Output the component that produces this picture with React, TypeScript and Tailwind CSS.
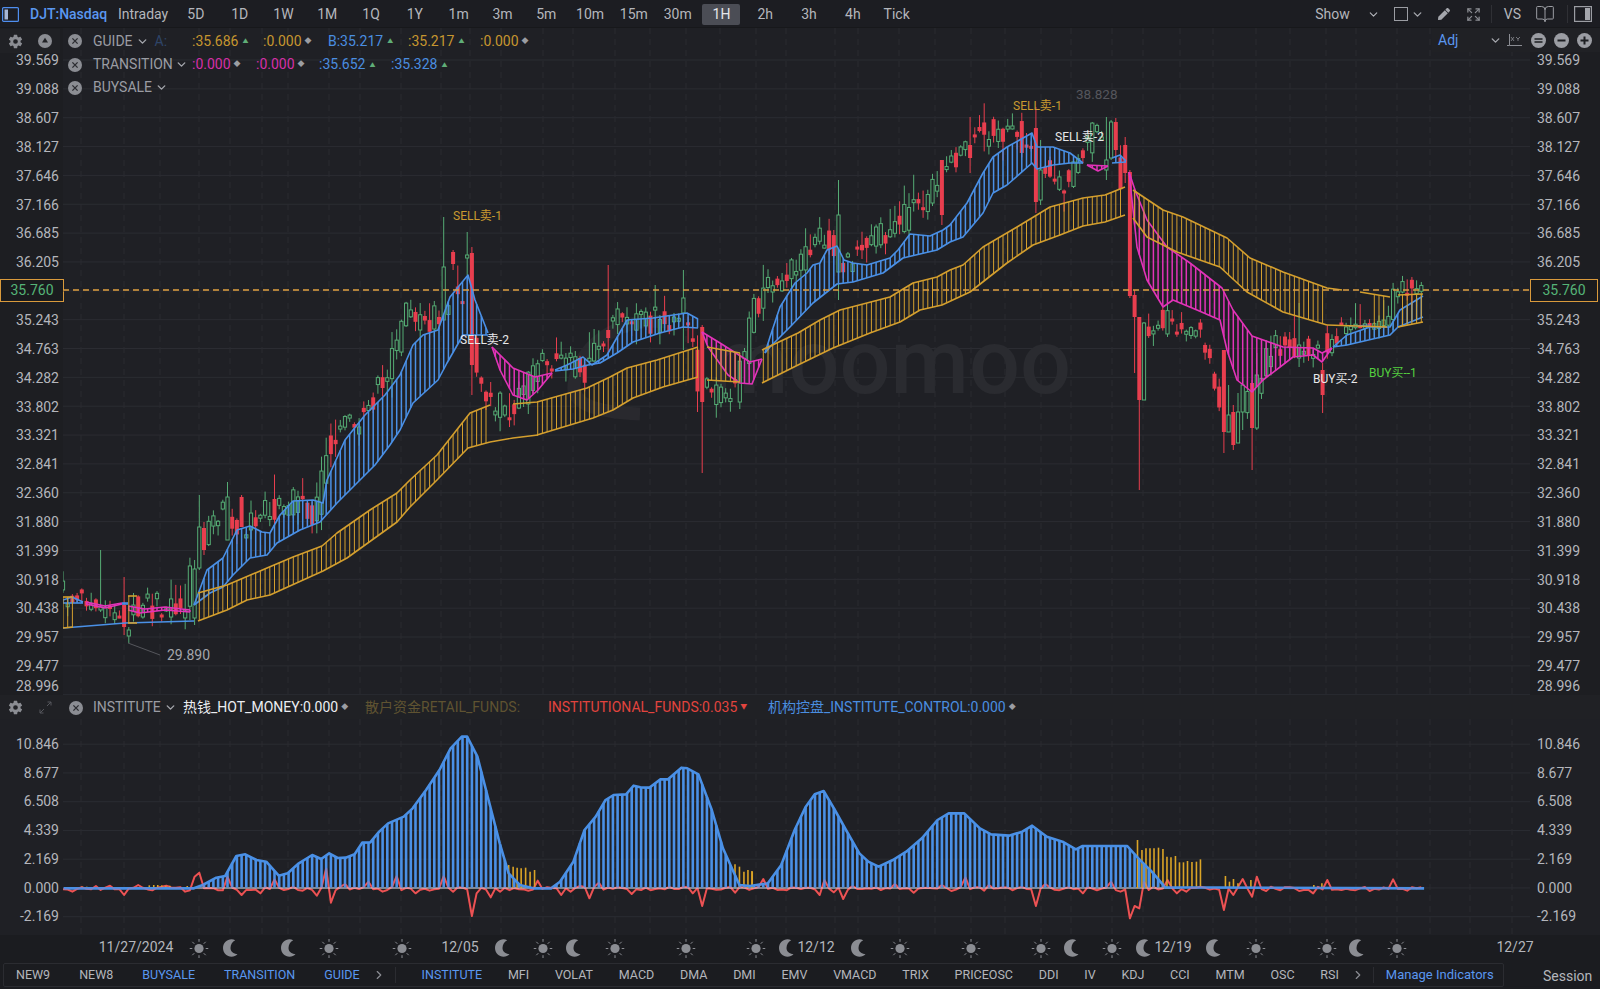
import React from "react";
import { ChevronDown, ChevronRight, BookOpen, Expand } from "lucide-react";
import { IoSettingsSharp } from "react-icons/io5";
import { FaPen } from "react-icons/fa";

type P = [number, number];
const STEP = 4.7;
const X0 = 63;
const N = Math.floor((1425 - X0) / STEP);
const xs = Array.from({ length: N + 1 }, (_, i) => X0 + i * STEP);

function rngOf(seed: number) {
  let a = seed;
  return () => {
    a |= 0;
    a = (a + 0x6d2b79f5) | 0;
    let t = Math.imul(a ^ (a >>> 15), 1 | a);
    t = (t + Math.imul(t ^ (t >>> 7), 61 | t)) ^ t;
    return ((t ^ (t >>> 14)) >>> 0) / 4294967296;
  };
}
function at(pts: P[], x: number) {
  if (x <= pts[0][0]) return pts[0][1];
  for (let i = 1; i < pts.length; i++) {
    if (x <= pts[i][0]) {
      const [a, b] = pts[i - 1];
      const [c, d] = pts[i];
      return b + ((d - b) * (x - a)) / (c - a);
    }
  }
  return pts[pts.length - 1][1];
}
const line = (pts: P[]) => pts.map((p) => p.join(",")).join(" ");

const BLUE = "#4a90e6";
const MAG = "#e233b8";
const GOLD = "#d49f2e";
const RED = "#e83e4e";
const GREEN = "#55ac74";

type Band = { c: string; u: P[]; l: P[]; from?: number; to?: number };
const bands: Band[] = [
  { c: BLUE, u: [[63, 600], [72, 597], [83, 602]], l: [[63, 603], [83, 603]] },
  { c: MAG, u: [[86, 602], [105, 606], [122, 603]], l: [[86, 604], [105, 608], [122, 604]] },
  { c: BLUE, u: [[122, 603], [128, 603]], l: [[122, 604], [128, 604]] },
  { c: MAG, u: [[128, 606], [145, 609], [165, 607], [190, 610]], l: [[128, 610], [140, 613], [165, 610], [190, 612]] },
  {
    c: BLUE,
    u: [[194, 605], [207, 570], [223, 558], [237, 530], [250, 526], [262, 532], [270, 533], [280, 515], [293, 501], [313, 500], [323, 503], [327, 480], [345, 440], [365, 415], [385, 395], [400, 375], [413, 345], [423, 335], [438, 330], [450, 297], [468, 275], [475, 300], [488, 333]],
    l: [[194, 605], [210, 593], [223, 587], [233, 575], [250, 558], [267, 555], [277, 543], [300, 530], [320, 522], [337, 503], [357, 483], [375, 465], [390, 445], [400, 430], [413, 403], [438, 380], [447, 363], [463, 335], [488, 335]],
  },
  { c: MAG, u: [[492, 347], [513, 368], [535, 377], [552, 373]], l: [[492, 347], [500, 370], [513, 395], [527, 400], [538, 390], [552, 373]] },
  {
    c: BLUE,
    u: [[555, 370], [567, 365], [583, 357], [592, 365], [607, 355], [627, 320], [653, 318], [687, 313], [698, 319]],
    l: [[555, 371], [573, 369], [588, 365], [600, 363], [617, 353], [633, 342], [660, 333], [683, 327], [698, 328]],
  },
  { c: MAG, u: [[702, 332], [720, 343], [750, 362], [762, 359]], l: [[702, 332], [708, 347], [728, 375], [740, 383], [752, 384], [762, 359]] },
  {
    c: BLUE,
    u: [[765, 353], [770, 337], [780, 307], [795, 283], [807, 273], [813, 265], [820, 263], [827, 250], [837, 246], [844, 260], [853, 263], [867, 265], [890, 258], [898, 250], [910, 234], [930, 236], [943, 230], [950, 225], [967, 203], [983, 173], [993, 157], [1007, 147], [1032, 133], [1037, 147], [1053, 147], [1070, 153], [1083, 163]],
    l: [[765, 353], [770, 347], [790, 327], [813, 303], [837, 284], [853, 282], [883, 273], [903, 258], [920, 254], [937, 250], [950, 242], [963, 237], [983, 213], [993, 193], [1007, 185], [1032, 163], [1037, 169], [1053, 165], [1070, 163], [1083, 163]],
  },
  { c: MAG, u: [[1087, 165], [1108, 166]], l: [[1087, 165], [1098, 171], [1108, 166]] },
  { c: BLUE, u: [[1112, 158], [1120, 155], [1126, 161]], l: [[1112, 163], [1126, 162]] },
  {
    c: MAG,
    u: [[1129, 172], [1135, 190], [1147, 220], [1167, 247], [1190, 263], [1222, 288], [1233, 310], [1252, 336], [1283, 347], [1313, 348], [1322, 353], [1332, 348]],
    l: [[1129, 172], [1137, 247], [1147, 280], [1163, 307], [1173, 300], [1197, 310], [1220, 320], [1227, 350], [1237, 380], [1252, 392], [1263, 380], [1293, 357], [1313, 355], [1322, 362], [1332, 348]],
  },
  {
    c: BLUE,
    u: [[1333, 347], [1347, 335], [1370, 327], [1390, 327], [1400, 310], [1423, 296]],
    l: [[1333, 347], [1347, 345], [1390, 335], [1398, 327], [1423, 317]],
  },
  { c: GOLD, u: [[63, 597], [73, 597]], l: [[63, 628], [73, 627]], to: 73 },
  { c: GOLD, u: [[128, 596], [137, 596]], l: [[128, 623], [137, 623]], to: 130 },
  {
    c: GOLD,
    u: [[198, 593], [227, 585], [267, 568], [293, 557], [322, 546], [337, 533], [370, 510], [397, 493], [410, 480], [437, 455], [470, 413], [490, 405]],
    l: [[198, 621], [227, 610], [247, 600], [270, 595], [323, 571], [347, 558], [397, 522], [410, 507], [437, 480], [468, 448], [490, 442]],
  },
  {
    c: GOLD,
    u: [[513, 404], [537, 402], [587, 388], [610, 377], [627, 368], [657, 360], [698, 347]],
    l: [[537, 435], [593, 418], [613, 410], [633, 398], [663, 387], [698, 377]],
    from: 537,
  },
  { c: GOLD, u: [[707, 347], [740, 353]], l: [[707, 380], [740, 382]] },
  {
    c: GOLD,
    u: [[762, 350], [798, 333], [820, 320], [840, 310], [890, 297], [913, 283], [937, 277], [950, 270], [963, 265], [983, 247], [1017, 227], [1050, 207], [1083, 198], [1105, 195], [1125, 187]],
    l: [[762, 383], [798, 365], [833, 348], [870, 333], [900, 322], [920, 310], [942, 305], [970, 292], [1007, 263], [1033, 245], [1060, 235], [1083, 226], [1105, 222], [1125, 215]],
  },
  {
    c: GOLD,
    u: [[1133, 190], [1163, 210], [1183, 217], [1227, 238], [1250, 258], [1283, 272], [1327, 288], [1342, 290]],
    l: [[1133, 218], [1147, 237], [1177, 252], [1220, 267], [1247, 292], [1283, 312], [1327, 325]],
    to: 1327,
  },
  { c: GOLD, u: [[1360, 292], [1390, 297]], l: [[1327, 325], [1387, 327]], from: 1372, to: 1390 },
  { c: GOLD, u: [[1398, 295], [1423, 294]], l: [[1398, 327], [1423, 322]] },
];

const midPath: P[] = [[63, 592], [90, 603], [127, 615], [150, 605], [190, 612], [197, 545], [215, 525], [232, 510], [250, 530], [270, 510], [300, 500], [320, 520], [330, 445], [360, 420], [390, 380], [410, 315], [440, 320], [455, 292], [470, 320], [490, 400], [520, 410], [545, 352], [590, 372], [620, 320], [650, 322], [690, 315], [705, 392], [740, 392], [760, 305], [790, 272], [830, 232], [850, 262], [900, 225], [940, 190], [970, 140], [1020, 125], [1040, 170], [1070, 180], [1100, 130], [1125, 180], [1137, 330], [1160, 322], [1200, 325], [1226, 400], [1250, 410], [1275, 345], [1320, 350], [1345, 330], [1375, 326], [1392, 322], [1398, 290], [1405, 278], [1425, 292]];

type C = { x: number; top: number; bot: number; hi: number; lo: number; up: boolean };
const special: [number, boolean, number, number, number, number][] = [
  [99, true, 550, 612, 606, 610], [124, false, 577, 635, 605, 627], [128, true, 627, 643, 630, 636],
  [195, true, 560, 625, 569, 618], [199, true, 495, 570, 527, 568], [204, false, 522, 555, 528, 550],
  [228, true, 482, 540, 497, 540], [241, false, 495, 527, 497, 527], [443, true, 217, 320, 267, 320],
  [451, false, 250, 270, 252, 264], [467, true, 232, 275, 255, 258], [472, false, 247, 395, 253, 365],
  [610, false, 265, 353, 330, 338], [702, false, 325, 473, 327, 402], [685, true, 270, 350, 298, 313],
  [1037, false, 107, 213, 128, 202], [1042, true, 140, 205, 170, 200], [1108, true, 117, 180, 160, 170],
  [1113, true, 120, 160, 122, 158], [1117, false, 118, 158, 122, 150], [1126, false, 137, 183, 145, 173],
  [1130, false, 170, 298, 172, 296], [1134, false, 290, 373, 295, 317], [1137, false, 317, 490, 317, 400],
  [1142, true, 322, 400, 323, 400], [1226, false, 350, 453, 350, 432], [1229, true, 385, 432, 415, 432],
  [1234, false, 405, 450, 412, 445], [1238, true, 393, 443, 412, 443], [1242, true, 377, 430, 385, 412],
  [1252, false, 380, 470, 383, 428], [1255, true, 353, 430, 375, 428], [1322, false, 363, 413, 370, 395],
  [1297, true, 303, 367, 345, 358], [970, false, 117, 173, 145, 158], [837, true, 180, 300, 215, 272],
  [940, false, 160, 225, 160, 215],
];
const r1 = rngOf(77);
const candles: C[] = xs.map((x) => {
  const amp = x > 1345 && x < 1395 ? 8 : 28;
  const a = at(midPath, x) + (r1() - 0.5) * amp;
  const b = at(midPath, x + STEP) + (r1() - 0.5) * amp;
  const top = Math.min(a, b);
  const bot = Math.max(a, b);
  return {
    x,
    top,
    bot: bot < top + 3 ? top + 3 : bot,
    hi: top - 1 - r1() * r1() * 26,
    lo: bot + 1 + r1() * r1() * 20,
    up: b < a,
  };
});
special.forEach(([x, up, hi, lo, top, bot]) => {
  const i = Math.round((x - X0) / STEP);
  if (candles[i]) candles[i] = { x: candles[i].x, up, hi, lo, top, bot };
});

const z9 = (p: P): P => [60 + p[0] / 2.24, 720 + p[1] / 3];
const z10 = (p: P): P => [750 + p[0] / 2.24, 780 + p[1] / 3];
const histTop: P[] = [
  ...([[8, 505], [300, 505], [320, 495], [350, 473], [370, 468], [395, 408], [415, 403], [440, 420], [462, 425], [490, 467], [510, 460], [535, 430], [565, 405], [585, 417], [603, 400], [622, 414], [640, 413], [660, 403], [677, 368], [695, 367], [715, 335], [735, 310], [770, 290], [790, 265], [820, 210], [850, 150], [875, 85], [900, 50], [912, 50], [935, 110], [960, 240], [985, 370], [1005, 460], [1030, 495], [1060, 505], [1100, 505], [1120, 485], [1150, 425], [1175, 330], [1200, 290], [1222, 240], [1240, 225], [1268, 223], [1285, 197], [1300, 202], [1320, 203], [1345, 178], [1362, 178], [1392, 143], [1405, 145], [1430, 163], [1460, 270], [1485, 385], [1505, 445], [1522, 495]] as P[]).map(z9),
  ...([[0, 318], [40, 310], [70, 255], [100, 150], [125, 80], [145, 43], [165, 33], [190, 90], [215, 150], [245, 220], [265, 245], [288, 260], [320, 240], [350, 215], [385, 175], [420, 120], [445, 100], [480, 100], [515, 145], [540, 163], [580, 167], [610, 155], [632, 137], [665, 170], [700, 185], [730, 208], [745, 198], [845, 198], [870, 235], [900, 275], [930, 322], [1510, 325]] as P[]).map(z10),
];
const goldBars: P[] = [
  ...([[200, 496], [210, 495], [219, 495], [228, 496], [237, 497], [246, 497], [285, 498], [50, 500], [60, 500], [1005, 435], [1015, 440], [1024, 443], [1033, 445], [1043, 443], [1053, 455], [1063, 450], [1512, 433], [1522, 440], [1532, 455], [1541, 450], [1550, 453]] as P[]).map(z9),
  ...([[5, 275], [868, 180], [878, 210], [887, 205], [896, 205], [905, 205], [915, 203], [925, 207], [934, 230], [943, 232], [953, 228], [962, 247], [971, 247], [980, 243], [990, 246], [1000, 245], [1009, 238], [1065, 288], [1074, 305], [1083, 297], [1093, 310], [1122, 300], [1263, 315], [1281, 310]] as P[]).map(z10),
];
const spikes: P[] = [
  ...([[30, 515], [85, 498], [110, 497], [145, 525], [175, 495], [205, 511], [240, 497], [280, 515], [303, 470], [313, 458], [325, 505], [360, 511], [378, 470], [405, 525], [430, 510], [445, 520], [478, 478], [500, 510], [545, 512], [575, 527], [595, 445], [612, 548], [640, 492], [695, 485], [720, 515], [757, 468], [800, 520], [828, 512], [860, 468], [880, 515], [922, 588], [932, 520], [968, 532], [985, 515], [1045, 512], [1075, 482], [1120, 525], [1145, 515], [1165, 498], [1185, 535], [1208, 488], [1280, 522], [1300, 510], [1415, 520], [1438, 558], [1452, 505], [1510, 518]] as P[]).map(z9),
  ...([[25, 297], [110, 327], [155, 345], [165, 300], [185, 337], [205, 357], [225, 318], [290, 330], [325, 312], [370, 338], [430, 315], [455, 333], [485, 292], [520, 332], [540, 315], [645, 378], [660, 312], [745, 340], [810, 305], [835, 335], [850, 415], [865, 378], [875, 385], [882, 305], [935, 300], [960, 340], [980, 335], [1065, 390], [1080, 345], [1100, 297], [1122, 350], [1133, 290], [1152, 333], [1235, 333], [1262, 340], [1295, 300], [1320, 330], [1390, 333], [1442, 298], [1470, 332], [1500, 322]] as P[]).map(z10),
];
const r2 = rngOf(5);
const redLine: P[] = (() => {
  const m = new Map<number, number>();
  xs.forEach((x, i) => m.set(i, 888 + (r2() - 0.35) * 3.5));
  spikes.forEach(([x, y]) => {
    const i = Math.round((x - X0) / STEP);
    if (i >= 0 && i <= N) m.set(i, y);
  });
  return xs.map((x, i) => [x, m.get(i)!] as P);
})();

const vLines = [81, 124, 160, 199, 230, 262, 288, 329, 360, 401, 441, 470, 501, 543, 573, 615, 650, 686, 720, 756, 786, 835, 858, 899, 935, 971, 1005, 1041, 1071, 1112, 1143, 1180, 1213, 1256, 1290, 1326, 1356, 1397, 1430, 1470, 1512];

function MainChart() {
  const gridY = Array.from({ length: 23 }, (_, i) => 60 + 28.85 * i);
  return (
    <svg width={1467} height={667} viewBox="63 28 1467 667" className="block">
      {gridY.map((y) => (
        <line key={y} x1={63} x2={1530} y1={y} y2={y} stroke="#2b2c32" strokeWidth={1} />
      ))}
      {vLines.map((x) => (
        <line key={x} x1={x} x2={x} y1={28} y2={695} stroke="#2a2b30" strokeWidth={1} strokeDasharray="6 5" />
      ))}
      <text x={710} y={393} fontSize={90} fontWeight={500} fill="#2a2b30" fontFamily="Roboto, sans-serif">moomoo</text>
      <path d="M667 322 C620 316 578 345 574 385 C572 402 590 412 640 414" fill="none" stroke="#29292e" strokeWidth={13} />
      {candles.map((c, i) => {
        const col = c.up ? GREEN : RED;
        return (
          <g key={i}>
            <line x1={c.x} x2={c.x} y1={c.hi} y2={c.lo} stroke={col} strokeWidth={1} />
            <rect
              x={c.x - (c.up ? 1.6 : 2)}
              y={c.top}
              width={c.up ? 3.2 : 4}
              height={c.bot - c.top}
              fill={c.up ? "#1f2025" : col}
              stroke={c.up ? col : "none"}
              strokeWidth={1}
            />
          </g>
        );
      })}
      <polyline points="63,628 125,623 194,621" fill="none" stroke={BLUE} strokeWidth={1.4} />
      <polyline points="490,442 513,438 538,435" fill="none" stroke={GOLD} strokeWidth={1.4} />
      <polyline points="1350,326 1370,325" fill="none" stroke={BLUE} strokeWidth={1.2} />
      {bands.map((b, k) => {
        const a = Math.max(b.u[0][0], b.l[0][0], b.from ?? 0);
        const z = Math.min(b.u[b.u.length - 1][0], b.l[b.l.length - 1][0], b.to ?? 9999);
        const hw = b.c === GOLD ? 1 : 1.5;
        return (
          <g key={k} fill="none" stroke={b.c}>
            {xs
              .filter((x) => x >= a && x <= z)
              .map((x) => (
                <line key={x} x1={x} x2={x} y1={at(b.u, x)} y2={at(b.l, x)} strokeWidth={hw} />
              ))}
            <polyline points={line(b.u)} strokeWidth={1.6} strokeLinejoin="round" />
            <polyline points={line(b.l)} strokeWidth={1.6} strokeLinejoin="round" />
          </g>
        );
      })}
      <line x1={63} x2={1530} y1={290} y2={290} stroke="#e0a040" strokeWidth={1.3} strokeDasharray="6 4" />
      <line x1={128} y1={643} x2={160} y2={655} stroke="#55565c" strokeWidth={1} />
      <g fontFamily="Roboto, 'Noto Sans CJK SC', sans-serif" fontSize={12}>
        <text x={453} y={220} fill="#c99a30">SELL卖-1</text>
        <text x={460} y={344} fill="#e8e8ea">SELL卖-2</text>
        <text x={1013} y={110} fill="#c99a30">SELL卖-1</text>
        <text x={1076} y={99} fill="#55565c" fontSize={13.5}>38.828</text>
        <text x={1055} y={141} fill="#e8e8ea">SELL卖-2</text>
        <text x={1313} y={383} fill="#e8e8ea">BUY买-2</text>
        <text x={1369} y={377} fill="#55d040">BUY买--1</text>
        <text x={167} y={660} fill="#a4a6ac" fontSize={14}>29.890</text>
      </g>
    </svg>
  );
}

function LowerChart() {
  const gridY = Array.from({ length: 7 }, (_, i) => 744.2 + 28.75 * i);
  return (
    <svg width={1467} height={216} viewBox="63 719 1467 216" className="block">
      {gridY.map((y) => (
        <line key={y} x1={63} x2={1530} y1={y} y2={y} stroke="#2b2c32" strokeWidth={1} />
      ))}
      {vLines.map((x) => (
        <line key={x} x1={x} x2={x} y1={719} y2={935} stroke="#2a2b30" strokeWidth={1} strokeDasharray="6 5" />
      ))}
      <polyline points={line(redLine)} fill="none" stroke="#ea4a42" strokeWidth={2} strokeLinejoin="round" />
      <line x1={195} x2={1180} y1={888} y2={888} stroke="#e6e8ee" strokeWidth={1} />
      {goldBars.map(([x, y], i) => (
        <line key={i} x1={x} x2={x} y1={888} y2={y} stroke="#dba426" strokeWidth={1.6} />
      ))}
      {xs.map((x) => {
        const y = at(histTop, x);
        return y < 886 ? <line key={x} x1={x} x2={x} y1={887.5} y2={y} stroke={BLUE} strokeWidth={2.6} /> : null;
      })}
      <polyline points={line(histTop)} fill="none" stroke={BLUE} strokeWidth={2.6} strokeLinejoin="round" />
      <polyline points={line(redLine)} fill="none" stroke="#ea6a8a" strokeWidth={1.4} strokeLinejoin="round" opacity={0.3} />
    </svg>
  );
}

const priceLabels = ["39.569", "39.088", "38.607", "38.127", "37.646", "37.166", "36.685", "36.205", "35.760", "35.243", "34.763", "34.282", "33.802", "33.321", "32.841", "32.360", "31.880", "31.399", "30.918", "30.438", "29.957", "29.477", "28.996"];
const lowerLabels = ["10.846", "8.677", "6.508", "4.339", "2.169", "0.000", "-2.169"];

function PriceAxis({ side }: { side: "l" | "r" }) {
  return (
    <div className={side === "l" ? "w-[63px] shrink-0 pt-[18.5px] bg-[#1d1e22]" : "w-[70px] shrink-0 pt-[18.5px] bg-[#1d1e22]"}>
      {priceLabels.map((v, i) => (
        <div
          key={v}
          className={
            "h-[28.85px] flex items-center " +
            (side === "l" ? "justify-end pr-[4px] " : "pl-[7px] ") +
            (i === 22 ? "-mt-[9px]" : "")
          }
        >
          {v === "35.760" ? (
            <div
              className={
                "h-[23px] -mt-[2px] bg-[#1a1b1e] border border-[#d99a3c] flex items-center justify-center text-[#55b477] " +
                (side === "l" ? "w-[64px] -mr-[5px]" : "w-[68px] -ml-[7px]")
              }
            >
              {v}
            </div>
          ) : (
            v
          )}
        </div>
      ))}
    </div>
  );
}
function LowerAxis({ side }: { side: "l" | "r" }) {
  return (
    <div className={side === "l" ? "w-[63px] shrink-0 pt-[11.1px]" : "w-[70px] shrink-0 pt-[11.1px]"}>
      {lowerLabels.map((v) => (
        <div key={v} className={"h-[28.75px] flex items-center " + (side === "l" ? "justify-end pr-[4px]" : "pl-[7px]")}>
          {v}
        </div>
      ))}
    </div>
  );
}

const XC = () => (
  <svg width={14} height={14} viewBox="0 0 14 14" className="shrink-0">
    <circle cx={7} cy={7} r={7} fill="#8b8d93" />
    <path d="M4.4 4.4 9.6 9.6M9.6 4.4 4.4 9.6" stroke="#2a2b30" strokeWidth={1.3} />
  </svg>
);
const Up = () => <span className="text-[#5fae78] text-[6px] ml-[4px] leading-none">▲</span>;
const Dia = () => <span className="text-[#9b9da3] text-[7px] ml-[3px] leading-none">◆</span>;
const Chev = ({ cls = "" }: { cls?: string }) => <ChevronDown size={13} strokeWidth={2.6} className={"text-[#a4a6ac] " + cls} />;

function CircleBtn({ kind }: { kind: "eq" | "minus" | "plus" }) {
  return (
    <svg width={15} height={15} viewBox="0 0 15 15">
      <circle cx={7.5} cy={7.5} r={7.5} fill="#9b9da3" />
      {kind === "eq" && <path d="M3.5 6h8M3.5 9h8" stroke="#1d1e22" strokeWidth={1.6} />}
      {kind === "minus" && <path d="M3.5 7.5h8" stroke="#1d1e22" strokeWidth={2} />}
      {kind === "plus" && <path d="M3.5 7.5h8M7.5 3.5v8" stroke="#1d1e22" strokeWidth={2} />}
    </svg>
  );
}

function TopBar() {
  const cells = ["5D", "1D", "1W", "1M", "1Q", "1Y", "1m", "3m", "5m", "10m", "15m", "30m", "1H", "2h", "3h", "4h", "Tick"];
  return (
    <div className="h-[28px] shrink-0 bg-[#1c1d22] flex items-center text-[#b4b6bc] border-b border-[#17181b] pt-[1px]">
      <svg width={17} height={15} viewBox="0 0 17 15" className="ml-[2px] shrink-0">
        <rect x={0.6} y={0.6} width={15.8} height={13.8} rx={1} fill="none" stroke="#4f8ff0" strokeWidth={1.2} />
        <rect x={2.5} y={2.5} width={3.5} height={10} fill="#a7b7d6" />
      </svg>
      <span className="ml-[11px] w-[88px] text-[#5a97f0] font-medium whitespace-nowrap">DJT:Nasdaq</span>
      <span className="w-[56px] whitespace-nowrap">Intraday</span>
      {cells.map((c) => (
        <div key={c} className="w-[43.8px] flex justify-center">
          <span className={c === "1H" ? "w-[38px] h-[21px] rounded-[2px] bg-[#4b4d55] text-[#e6e7ea] flex items-center justify-center" : ""}>{c}</span>
        </div>
      ))}
      <div className="ml-auto flex items-center">
        <span>Show</span>
        <ChevronDown size={13} className="ml-[17px]" />
        <span className="ml-[14px] w-[14px] h-[14px] border border-[#9b9da3]" />
        <Chev cls="ml-[3px]" />
        <FaPen size={12} className="ml-[14px] text-[#a4a6ac]" />
        <Expand size={15} className="ml-[16px] text-[#8b8d93]" />
        <span className="ml-[10px] w-px h-[18px] bg-[#2f3035]" />
        <span className="ml-[12px]">VS</span>
        <BookOpen size={20} strokeWidth={1.2} className="ml-[14px] text-[#9b9da3]" />
        <span className="ml-[12px] w-px h-[18px] bg-[#2f3035]" />
        <svg width={18} height={16} viewBox="0 0 18 16" className="ml-[6px] mr-[8px]">
          <rect x={0.6} y={0.6} width={16.8} height={14.8} fill="none" stroke="#9b9da3" strokeWidth={1.2} />
          <rect x={11} y={2} width={5} height={12} fill="#a4a6ac" />
        </svg>
      </div>
    </div>
  );
}

function Legends() {
  return (
    <div className="absolute inset-x-0 top-0 text-[#9a9ca3]">
      <div className="h-[25px] flex items-center pt-[1px]">
        <div className="w-[60px] h-[24px] bg-[#202125] flex items-center pl-[8px] shrink-0">
          <IoSettingsSharp size={15} className="text-[#8b8d93]" />
          <svg width={14} height={14} viewBox="0 0 14 14" className="ml-[15px]">
            <circle cx={7} cy={7} r={7} fill="#8b8d93" />
            <path d="M7 3.8 10 8.6H4Z" fill="#202125" />
          </svg>
        </div>
        <div className="ml-[8px]"><XC /></div>
        <div className="ml-[11px] w-[99px] flex items-center">
          GUIDE<Chev cls="ml-[3px]" />
          <span className="ml-[6px] text-[#2e4468]">A:</span>
        </div>
        <div className="w-[71px] flex items-center text-[#c6962f]">:35.686<Up /></div>
        <div className="w-[65px] flex items-center text-[#c6962f]">:0.000<Dia /></div>
        <div className="w-[80px] flex items-center text-[#4a8ee0]">B:35.217<Up /></div>
        <div className="w-[72px] flex items-center text-[#c6962f]">:35.217<Up /></div>
        <div className="flex items-center text-[#c6962f]">:0.000<Dia /></div>
      </div>
      <div className="h-[23px] flex items-center">
        <div className="ml-[68px]"><XC /></div>
        <div className="ml-[11px] w-[99px] flex items-center">
          TRANSITION<Chev cls="ml-[2px]" />
        </div>
        <div className="w-[64px] flex items-center text-[#d62fa8]">:0.000<Dia /></div>
        <div className="w-[63px] flex items-center text-[#d62fa8]">:0.000<Dia /></div>
        <div className="w-[72px] flex items-center text-[#4a8ee0]">:35.652<Up /></div>
        <div className="flex items-center text-[#4a8ee0]">:35.328<Up /></div>
      </div>
      <div className="h-[23px] flex items-center">
        <div className="ml-[68px]"><XC /></div>
        <div className="ml-[11px] flex items-center">
          BUYSALE<Chev cls="ml-[3px]" />
        </div>
      </div>
      <div className="absolute top-0 right-0 w-[168px] h-[24px] bg-[#202125] flex items-center pl-[6px]">
        <span className="text-[#5a97f0] w-[50px]">Adj</span>
        <Chev cls="ml-[1px]" />
        <svg width={15} height={15} viewBox="0 0 15 15" className="ml-[5px]" stroke="#8b8d93" fill="none">
          <path d="M2.5 1v11.5H15M0 12.5h2.5" strokeWidth={1} />
          <path d="M4 4l3 4M7 4 4 8M9 4l2 2 2-2M11 6v2" strokeWidth={0.8} />
        </svg>
        <span className="ml-[9px]"><CircleBtn kind="eq" /></span>
        <span className="ml-[8px]"><CircleBtn kind="minus" /></span>
        <span className="ml-[8px]"><CircleBtn kind="plus" /></span>
      </div>
    </div>
  );
}

function IndBar() {
  return (
    <div className="h-[24px] shrink-0 bg-[#202125] flex items-center text-[#9a9ca3] pt-[1px]">
      <IoSettingsSharp size={15} className="ml-[8px] text-[#8b8d93] shrink-0" />
      <svg width={13} height={13} viewBox="0 0 13 13" className="ml-[16px] shrink-0" stroke="#55565c" fill="none">
        <path d="M1 12 5 8M1 8.5V12h3.5M12 1 8 5M8.5 1H12v3.5" />
      </svg>
      <div className="ml-[17px]"><XC /></div>
      <div className="ml-[10px] w-[90px] flex items-center">INSTITUTE<Chev cls="ml-[3px]" /></div>
      <div className="w-[182px] flex items-center text-[#eceef2] whitespace-nowrap">热钱_HOT_MONEY:0.000<Dia /></div>
      <div className="w-[183px] text-[#5f5331] whitespace-nowrap">散户资金RETAIL_FUNDS:</div>
      <div className="w-[220px] flex items-center text-[#e2443e] whitespace-nowrap">
        INSTITUTIONAL_FUNDS:0.035<span className="text-[7px] ml-[3px]">▼</span>
      </div>
      <div className="flex items-center text-[#4a8ee0] whitespace-nowrap">机构控盘_INSTITUTE_CONTROL:0.000<Dia /></div>
    </div>
  );
}

const Sun = () => (
  <svg width={19} height={19} viewBox="0 0 19 19" stroke="#8b8d93" strokeWidth={1}>
    <circle cx={9.5} cy={9.5} r={4.6} fill="#8b8d93" stroke="none" />
    <path d="M9.5 0v2.8M9.5 16.2V19M0 9.5h2.8M16.2 9.5H19M2.8 2.8l2 2M14.2 14.2l2 2M16.2 2.8l-2 2M4.8 14.2l-2 2" />
  </svg>
);
const Moon = () => (
  <svg width={16} height={18} viewBox="0 0 16 18">
    <path d="M9.5 0.3C5 0.3 1 4 1 9s4 8.7 8.5 8.7c2.4 0 4.6-1 6-2.7C11.5 15 8.5 12.6 8.5 9c0-3.6 2-6.5 4.7-7.800C12.100 0.600 10.700 0.300 9.500 0.300Z" fill="#8b8d93" />
  </svg>
);

const axisItems: [string, number][] = [
  ["s", 199], ["m", 230], ["m", 288], ["s", 329], ["s", 401.5], ["m", 501.5], ["s", 543], ["m", 573], ["s", 615], ["s", 686], ["s", 756], ["m", 786], ["m", 858], ["s", 899.5], ["s", 971], ["s", 1041], ["m", 1071], ["s", 1112], ["m", 1143], ["m", 1213], ["s", 1256], ["s", 1326.5], ["m", 1356], ["s", 1397],
];
const axisDates: [string, number][] = [["11/27/2024", 136], ["12/05", 460], ["12/12", 816], ["12/19", 1173], ["12/27", 1515]];

function XAxis() {
  return (
    <div className="h-[28px] shrink-0 relative">
      {axisItems.map(([k, x]) => (
        <span key={x} className="absolute top-[4px] -translate-x-1/2" style={{ left: x }}>
          {k === "s" ? <Sun /> : <Moon />}
        </span>
      ))}
      {axisDates.map(([d, x]) => (
        <span key={d} className="absolute top-[3px] -translate-x-1/2 leading-[19px]" style={{ left: x }}>
          {d}
        </span>
      ))}
    </div>
  );
}

function Tabs() {
  const a = ["NEW9", "NEW8", "BUYSALE", "TRANSITION", "GUIDE"];
  const b = ["INSTITUTE", "MFI", "VOLAT", "MACD", "DMA", "DMI", "EMV", "VMACD", "TRIX", "PRICEOSC", "DDI", "IV", "KDJ", "CCI", "MTM", "OSC", "RSI"];
  const on = new Set(["BUYSALE", "TRANSITION", "GUIDE", "INSTITUTE"]);
  const cls = (t: string) => (on.has(t) ? "text-[#5a97f0]" : "");
  return (
    <div className="h-[26px] shrink-0 flex items-start text-[12.5px]">
      <div className="ml-[3px] w-[1501px] h-[24px] border border-[#2b2c31] rounded-[2px] flex items-center pl-[12px] whitespace-nowrap">
        <div className="flex items-center gap-[29px]">
          {a.map((t) => (
            <span key={t} className={cls(t)}>{t}</span>
          ))}
        </div>
        <ChevronRight size={14} className="ml-[12px] shrink-0 text-[#8b8d93]" />
        <span className="ml-[9px] w-px h-[16px] bg-[#2b2c31]" />
        <div className="ml-[26px] flex items-center gap-[25.75px]">
          {b.map((t) => (
            <span key={t} className={cls(t)}>{t}</span>
          ))}
        </div>
        <ChevronRight size={14} className="ml-[12px] shrink-0 text-[#8b8d93]" />
        <span className="ml-[8px] w-px h-[16px] bg-[#2b2c31]" />
        <span className="ml-[12px] text-[#5a97f0] text-[13px]">Manage Indicators</span>
      </div>
      <span className="ml-[39px] text-[14px] mt-[3px]">Session</span>
    </div>
  );
}

export default function App() {
  return (
    <div className="w-[1600px] h-[989px] overflow-hidden bg-[#1b1c20] flex flex-col text-[14px] text-[#b4b6bc] font-['Roboto','Noto_Sans_CJK_SC',sans-serif]">
      <TopBar />
      <div className="h-[667px] shrink-0 flex relative bg-[#1f2025]">
        <PriceAxis side="l" />
        <div className="flex-1 min-w-0"><MainChart /></div>
        <PriceAxis side="r" />
        <Legends />
      </div>
      <IndBar />
      <div className="h-[216px] shrink-0 flex bg-[#1f2025]">
        <LowerAxis side="l" />
        <div className="flex-1 min-w-0"><LowerChart /></div>
        <LowerAxis side="r" />
      </div>
      <XAxis />
      <Tabs />
    </div>
  );
}
